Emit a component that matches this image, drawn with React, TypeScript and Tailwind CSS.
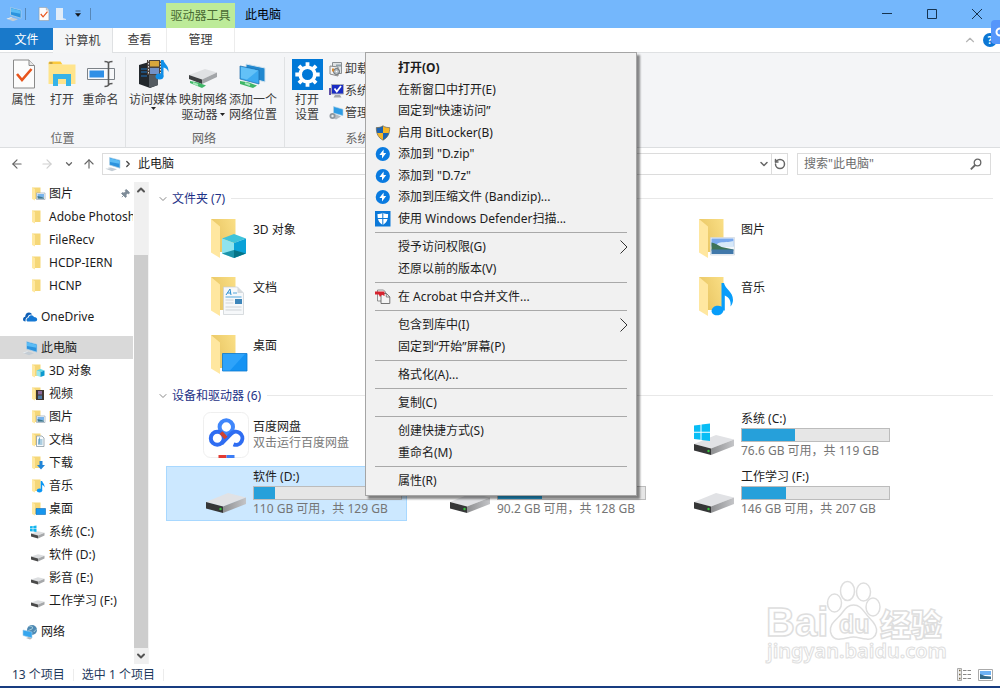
import type { ReactNode } from "react";
import { ChevronRight, ChevronDown, ChevronUp, ArrowLeft, ArrowRight, ArrowUp, Pin, RotateCcw } from "lucide-react";

/* ---------- Icons ---------- */

function PcIcon({ className = "w-4 h-4" }: { className?: string }) {
  return (
    <svg viewBox="0 0 16 16" className={className} aria-hidden="true">
      <path d="M4.500 1.500 15 4.200v8L4.500 9z" fill="#2b93de" stroke="#b8d4e6" strokeWidth="0.700" />
      <path d="M5 2.300 14.500 4.800v3L5 6z" fill="#5bbcf5" />
      <path d="m.5 12.800 4.500-1.600 7 2.100-5 1.900z" fill="#c3ccd4" />
      <path d="m.5 12.800 4.500-1.600 1.500.4-4.500 1.700z" fill="#e8edf0" />
    </svg>
  );
}

type Badge = "none" | "cube" | "video" | "picture" | "doc" | "download" | "music" | "desktop";

function SmallFolder({ badge }: { badge: Badge }) {
  return (
    <svg viewBox="0 0 16 16" className="w-4 h-4 shrink-0" aria-hidden="true">
      <path d="M2 1.500h8.500v11.500H5z" fill="#f5d778" />
      <path d="M2 1.500 5 3v11.500L2 13z" fill="#ffe8a0" />
      {badge === "cube" && (
        <>
          <path d="m10.500 6 4 1.500-4 1.500-4-1.500z" fill="#5fd6e6" />
          <path d="m6.500 7.500 4 1.500v5l-4-1.500z" fill="#9be7ef" />
          <path d="m14.500 7.500-4 1.500v5l4-1.500z" fill="#0b9ad0" />
        </>
      )}
      {badge === "video" && (
        <>
          <path d="M6 4h8v10H6z" fill="#40362f" />
          <path d="M8 5h4v3.500H8z" fill="#8a6a9c" />
          <path d="M8 9.500h4V13H8z" fill="#4f7ba8" />
        </>
      )}
      {badge === "picture" && (
        <>
          <path d="M6.500 7h8.500v6.500H6.500z" fill="#fff" stroke="#9aa7b4" strokeWidth="0.700" />
          <path d="M7.500 8h6.500v3H7.500z" fill="#78b4ec" />
          <path d="m7.500 10 2 .500 4.500 1v1.200H7.500z" fill="#3e7891" />
        </>
      )}
      {badge === "doc" && (
        <>
          <path d="M6.500 4h5.500l2 2v8.500H6.500z" fill="#f7fafc" stroke="#8c9aa5" strokeWidth="0.800" />
          <path d="M8 8h4.500M8 10h4.500M8 12h4.500M9.500 5.500 9 12" stroke="#3e8bb8" strokeWidth="0.800" />
        </>
      )}
      {badge === "download" && <path d="M9.500 6h3v4H15l-4 4.500L7 10h2.500z" fill="#2185d8" />}
      {badge === "music" && (
        <>
          <ellipse cx="9.500" cy="12.500" rx="2.700" ry="2" fill="#0a96f5" />
          <path d="M10.700 3h1.500c.2 2 2.600 2.800 2.400 6.500-.6-1.600-1.500-2.200-2.400-2.500v5.500h-1.500z" fill="#0a96f5" />
        </>
      )}
      {badge === "desktop" && <path d="M6 7.500h9.500v6H6z" fill="#1696ee" stroke="#0b6cb8" strokeWidth="0.600" />}
    </svg>
  );
}

function SmallDrive({ windows = false }: { windows?: boolean }) {
  return (
    <svg viewBox="0 0 16 16" className="w-4 h-4 shrink-0" aria-hidden="true">
      <path d="m1 9.500 7-2.200 6.500 1.500L8 11.500z" fill="#dcdee0" />
      <path d="m1 9.500 7 2v3l-7-2z" fill="#4a4a4a" />
      <path d="m8 11.500 6.500-2.700v2.700L8 14.500z" fill="#a6a8aa" />
      {windows && (
        <path d="M0 2.200 2.700 2v2.400H0zM3.300 1.900 6.500 1.500v2.900H3.300zM0 5h2.700v2.400L0 7.200zM3.300 5h3.200v2.900l-3.200-.4z" fill="#12b4ee" />
      )}
    </svg>
  );
}

function CloudIcon() {
  return (
    <svg viewBox="0 0 16 16" className="w-4 h-4 shrink-0" aria-hidden="true">
      <path d="M1 10.500c0-1.500 1-2.500 2.200-2.700C3.200 5 5 3.500 7 3.500c1.500 0 2.500.8 3 2C7.500 5 6 6.500 5.700 8.200 4 8.500 3.400 10 3.500 12.500 2 12.500 1 11.800 1 10.500z" fill="#0f5fb5" />
      <path d="M4.500 11c0-1.400 1-2.200 2-2.300.2-1.500 1.400-2.400 2.800-2.400 1.300 0 2.200.7 2.600 1.800 2 0 3.300 1 3.300 2.500 0 1.300-1 2-2.200 2H6.300c-1 0-1.800-.6-1.800-1.600z" fill="#1478d4" />
    </svg>
  );
}

function NetworkIcon() {
  return (
    <svg viewBox="0 0 16 16" className="w-4 h-4 shrink-0" aria-hidden="true">
      <circle cx="10" cy="6" r="5" fill="#4f8ab4" />
      <path d="M7.500 2.500c2-1 3 0 3 1.500S8 5.500 6.500 6.500M12 8c.5-2 2-1.500 2.500-2.500" stroke="#a8d0dc" fill="none" />
      <path d="m1 6 9 2v6L1 11.500z" fill="#36a6ee" stroke="#9fcdeb" strokeWidth="0.600" />
      <path d="m4 14 3-1 3 1.500-2 1z" fill="#b0b8be" />
    </svg>
  );
}

function PictureBadge() {
  return (
    <>
      <path d="M19.500 23.500h24V41h-24z" fill="#f2f6fa" stroke="#c8d2dc" strokeWidth="0.600" />
      <path d="M20.500 24.500h22v8h-22z" fill="#79a9ee" />
      <path d="M26 30c4-3 9-1 16.500-3v6H26z" fill="#d8e9f8" />
      <path d="M20.500 28.500c4 .5 6 2.500 10 4.500l12 2.500v1h-22z" fill="#3d7358" />
      <path d="M20.500 35.500h22V40h-22z" fill="#4178aa" />
    </>
  );
}

function BigFolder({ badge }: { badge: Badge }) {
  return (
    <svg viewBox="0 0 48 48" className="w-12 h-12 shrink-0" aria-hidden="true">
      <defs>
        <linearGradient id={`back-${badge}`} x1="0" y1="0.500" x2="1" y2="0">
          <stop offset="0" stopColor="#e8c562" />
          <stop offset="1" stopColor="#fadf86" />
        </linearGradient>
      </defs>
      <path d="M8 5h24.500v33H16z" fill={`url(#back-${badge})`} />
      <path d="M8 5 17 12.500V44L8 38.500z" fill="#ffe7a0" />
      {badge === "cube" && (
        <>
          <path d="m31 20 12 4.500L31 29l-12-4.500z" fill="#3fc3da" />
          <path d="M19 24.500 31 29v15L19 39.500z" fill="#8fe3ee" />
          <path d="M43 24.500 31 29v15l12-4.500z" fill="#0aa2d8" />
          <path d="M19 39.500 31 36v8z" fill="#1c94ab" />
          <path d="M43 39.500 31 36v8z" fill="#067487" />
        </>
      )}
      {badge === "doc" && (
        <>
          <path d="M20.500 15h14l6 6v21.500h-20z" fill="#f6f8fa" stroke="#c9ced3" strokeWidth="0.700" />
          <path d="M34.500 15v6h6z" fill="#d5dade" />
          <path d="m23 23 4-6 1 6M24.500 21h3.500" stroke="#2d8fd0" fill="none" />
          <path d="M30 21h4M22.500 25h16" stroke="#57a8dc" />
          <path d="M22.500 28h8M22.500 31h8M22.500 35h16M22.500 38h16" stroke="#cfd4d8" />
          <path d="M32 27h7v5h-7z" fill="#3e86ba" />
        </>
      )}
      {badge === "desktop" && (
        <>
          <path d="M19.500 23.500h24.500v17.500h-24.500z" fill="#1593f3" stroke="#0c78ce" strokeWidth="0.800" />
          <path d="M20 24h22L27 40.500h-7z" fill="#2ea3fa" />
        </>
      )}
      {badge === "picture" && <PictureBadge />}
      {badge === "music" && (
        <>
          <ellipse cx="26.500" cy="38.500" rx="6" ry="4.800" fill="#079dfa" transform="rotate(-12 26.500 38.500)" />
          <path d="M30.500 11h2.500c1 6 9 8.500 9 17 0 2-.8 4.500-2.500 6.500 1-6-2-9.500-5.700-11v15h-3.300z" fill="#079dfa" />
        </>
      )}
    </svg>
  );
}

function BigDrive({ windows = false }: { windows?: boolean }) {
  return (
    <svg viewBox="0 0 48 48" className="w-12 h-12 shrink-0" aria-hidden="true">
      <defs>
        <linearGradient id="side" x1="0" x2="1">
          <stop offset="0" stopColor="#8e8f91" />
          <stop offset="1" stopColor="#c4c5c8" />
        </linearGradient>
      </defs>
      <path d="m3 33 22-9 18 4.500L20 37.500z" fill="#e1e2e5" />
      <path d="M3 33 20 37.500V44L3 39.500z" fill="#353637" />
      <path d="m20 37.500 23-9V35L20 44z" fill="url(#side)" />
      <circle cx="17.500" cy="40" r="1.200" fill="#35c43a" />
      {windows && (
        <path d="M3 14.500 9.500 13.800v7H3zM10.500 13.600 19 12.500v8.300h-8.500zM3 21.800h6.500v7L3 28zM10.500 21.800H19v8.300l-8.500-1.200z" fill="#08bdf5" />
      )}
    </svg>
  );
}

function NetdiskIcon() {
  return (
    <svg viewBox="0 0 48 48" className="w-12 h-12 shrink-0" aria-hidden="true">
      <rect x="0.500" y="1.500" width="45" height="45" rx="7" fill="#fff" stroke="#efefef" />
      <g fill="none" strokeWidth="4">
        <circle cx="23.300" cy="16" r="6.700" stroke="#3f86fb" />
        <circle cx="14.300" cy="27.300" r="6.500" stroke="#2f6df2" />
        <path d="M18.500 32.500 28 23a6.500 6.500 0 1 1 2.500 10.300" stroke="#2f6df2" />
        <path d="m18 21.500 5 5.500" stroke="#d2432f" />
      </g>
      <path d="M15.500 44h8v3h-8z" fill="#e23b33" />
      <path d="M23.500 44h8v3h-8z" fill="#3c7df5" />
    </svg>
  );
}

function CheckDoc({ className }: { className: string }) {
  return (
    <svg viewBox="0 0 24 30" className={className} aria-hidden="true">
      <path d="M1.500 1h15.500l5.500 5.500V29h-21z" fill="#fcfcfc" stroke="#8a8a8a" />
      <path d="M17 1v5.500h5.500" fill="#e6e6e6" stroke="#8a8a8a" />
      <path d="m5 15 5 6 9.500-11" fill="none" stroke="#e8541c" strokeWidth="2.600" />
    </svg>
  );
}

function OpenFolderIcon() {
  return (
    <svg viewBox="0 0 30 30" className="w-[30px] h-[30px]" aria-hidden="true">
      <path d="M1.500 4.500c0-1.500.5-2 2-2h10l2 3h-14z" fill="#fbc93c" />
      <path d="M1.500 5.500h27V25h-27z" fill="#ffe48c" />
      <path d="M2.500 4h3" stroke="#8b7440" />
      <path d="M6 27V15h18v12h-5v-7h-8v7z" fill="#37b3e8" />
    </svg>
  );
}

function RenameIcon() {
  return (
    <svg viewBox="0 0 30 30" className="w-[30px] h-[30px]" aria-hidden="true">
      <path d="M1.500 9.500h27v11h-27z" fill="#f7f8fa" stroke="#7c8288" />
      <path d="M3.500 11.500H18v7H3.500z" fill="#2f8fe6" />
      <path d="M18.500 2.500c2.500 0 4 .7 4 2v22c0-1.300 1.500-2 4-2M26.500 2.500c-2.500 0-4 .7-4 2M18.500 27.500c2.500 0 4-.7 4-2" fill="none" stroke="#5a5a5a" strokeWidth="1.600" />
    </svg>
  );
}

function MediaIcon() {
  return (
    <svg viewBox="0 0 32 30" className="w-8 h-[30px]" aria-hidden="true">
      <path d="m2 6 10-3 9 2v21l-8 3L2 25z" fill="#23282d" />
      <path d="m12 8 9-3v21l-9 3z" fill="#555b61" />
      <path d="M4 10h6M4 13h6M4 17h6" stroke="#1e73c0" />
      <path d="M10 1h15v15H10z" fill="#4b423e" />
      <path d="M13 2h9v5.500h-9z" fill="#d9a63c" />
      <path d="M13 9h9v6h-9z" fill="#7392c8" />
      <path d="M11.500 1v15M23.500 1v15" stroke="#ddd" strokeDasharray="1.500 1.500" />
      <ellipse cx="22.500" cy="17.500" rx="4" ry="3" fill="#118fe8" />
      <path d="M24 1h2.500c.5 4 5.500 5 5 12-1.300-3-3-4-5-4.500v9H24z" fill="#118fe8" />
    </svg>
  );
}

function MapDriveIcon() {
  return (
    <svg viewBox="0 0 32 30" className="w-8 h-[30px]" aria-hidden="true">
      <path d="m2 16 16-6 12 3.500-15 7z" fill="#dfe1e3" />
      <path d="m2 16 13 4.500V25L2 20z" fill="#3c3e40" />
      <path d="m15 20.500 15-7V18l-15 7z" fill="#a2a5a8" />
      <path d="m3 22 8 1.500 8 3-4 2.500-12-5z" fill="#3fb667" />
      <path d="m6 24 5 2" stroke="#a5e6bb" strokeWidth="2" />
    </svg>
  );
}

function NetPlaceIcon() {
  return (
    <svg viewBox="0 0 32 30" className="w-8 h-[30px]" aria-hidden="true">
      <path d="m9 5 19 4v14L9 18z" fill="#2288cf" stroke="#d4e4ef" />
      <path d="m3 7 19 4v14L3 20z" fill="#3daaf0" stroke="#1c6ca8" strokeWidth="0.700" />
      <path d="m4 8 17 3.500-11 9L4 19z" fill="#63c1f7" />
      <path d="m3 22 9 1.500 8 3-4 2.500-13-4z" fill="#3fb667" />
      <path d="m8 24 5 2" stroke="#a5e6bb" strokeWidth="2" />
    </svg>
  );
}

function GearTile() {
  return (
    <svg viewBox="0 0 31 31" className="w-[31px] h-[31px]" aria-hidden="true">
      <path d="M0 0h31v31H0z" fill="#0078d7" />
      <g fill="none" stroke="#fff">
        <circle cx="15.500" cy="15.500" r="7.300" strokeWidth="3.600" />
        <path d="M15.500 3.300v4M15.500 23.700v4M3.300 15.500h4M23.700 15.500h4M6.900 6.900l2.800 2.800M21.300 21.300l2.800 2.800M6.900 24.100l2.800-2.800M21.300 9.700l2.800-2.800" strokeWidth="3.800" />
      </g>
    </svg>
  );
}

function UninstallIcon() {
  return (
    <svg viewBox="0 0 16 16" className="w-4 h-4" aria-hidden="true">
      <path d="M4.500 1.500h9v11h-9z" fill="#dfe2e4" stroke="#8a8f93" />
      <path d="m2 5 8 1v9l-8-2z" fill="#f3f3f3" stroke="#888" />
      <circle cx="8.500" cy="10.500" r="3" fill="#b6bdc2" stroke="#60676c" />
      <circle cx="8.500" cy="10.500" r="0.800" fill="#fff" />
      <path d="M8 3.500h5v2H8z" fill="#8fa0ab" />
      <path d="M4 7.500h2v3H4z" fill="#d8872f" />
    </svg>
  );
}

function SystemIcon() {
  return (
    <svg viewBox="0 0 16 16" className="w-4 h-4" aria-hidden="true">
      <path d="M1 5h2v7H1z" fill="#5f50a8" />
      <path d="M3.500 1.500h12v9.500h-12z" fill="#1a2cc4" stroke="#a8acb8" />
      <path d="m6.500 5.500 2.300 3 4.200-5.500" fill="none" stroke="#fff" strokeWidth="1.800" />
      <path d="M7 12h5l1.500 2.500h-8z" fill="#a5a8ac" />
    </svg>
  );
}

function ManageIcon() {
  return (
    <svg viewBox="0 0 16 16" className="w-4 h-4" aria-hidden="true">
      <path d="M5.500 1.500 15 4.200v6.500L5.500 8z" fill="#2e9ce4" stroke="#b3d2e4" strokeWidth="0.600" />
      <path d="m2 11 5-2 6 2.500-5 3z" fill="#b5bcc2" />
      <circle cx="4.500" cy="11" r="3" fill="#8d979e" />
      <circle cx="4.500" cy="11" r="1.200" fill="#e8ecee" />
    </svg>
  );
}

function ShieldIcon() {
  return (
    <svg viewBox="0 0 16 16" className="w-4 h-4" aria-hidden="true">
      <path d="M8 .8C6 2.300 3.500 2.600 1.300 2.600c0 6 1.700 10 6.700 12.600 5-2.600 6.700-6.600 6.700-12.600C12.500 2.600 10 2.300 8 .8z" fill="#f6b526" />
      <path d="M8 .8C6 2.300 3.500 2.600 1.300 2.600c0 2 .2 3.800.7 5.400h6zM8 8v7.200c3.200-1.700 5-4 6-7.200z" fill="#1c64b4" />
      <path d="M8 .8C6 2.300 3.500 2.600 1.300 2.600c0 6 1.700 10 6.700 12.600 5-2.600 6.700-6.600 6.700-12.600C12.500 2.600 10 2.300 8 .8z" fill="none" stroke="#6b6a5e" strokeWidth="0.700" />
    </svg>
  );
}

function BandizipIcon() {
  return (
    <svg viewBox="0 0 16 16" className="w-4 h-4" aria-hidden="true">
      <circle cx="7.800" cy="8" r="7.100" fill="#0a7be0" />
      <path d="M8.600 3.500V7h2.600l-4.200 5.500V9H4.400z" fill="#fff" />
    </svg>
  );
}

function DefenderIcon() {
  return (
    <svg viewBox="0 0 16 16" className="w-4 h-4" aria-hidden="true">
      <path d="M0 0h15.500v15.500H0z" fill="#0b78d8" />
      <path d="M7.800 1.800C6.300 2.800 4.300 3.100 2.500 3.100 2.500 8.500 3.800 12 7.800 14c4-2 5.300-5.500 5.300-10.900-1.800 0-3.800-.3-5.300-1.300z" fill="#fff" />
      <path d="M7.800 2v12M2.500 7.500h10.600" stroke="#0b78d8" />
    </svg>
  );
}

function AcrobatIcon() {
  return (
    <svg viewBox="0 0 16 16" className="w-4 h-4" aria-hidden="true">
      <path d="M2.500 1h6l2 2v9h-8z" fill="#f4f4f4" stroke="#777" strokeWidth="0.800" />
      <path d="M6 4.500h5.500L14.800 8v6.500H6z" fill="#f4f4f4" stroke="#666" strokeWidth="0.900" />
      <path d="M11.300 4.500V8h3.500" fill="none" stroke="#666" strokeWidth="0.800" />
      <path d="M0 2.500h9.500V7L7 5.800 5 8 3.800 5.500H0z" fill="#d6232f" />
    </svg>
  );
}

function SearchIcon() {
  return (
    <svg viewBox="0 0 12 12" className="h-3 w-3" fill="none" stroke="#666" aria-hidden="true">
      <circle cx="7.500" cy="4.500" r="3.300" strokeWidth="1.300" />
      <path d="m5.200 7-4.400 4.400" strokeWidth="1.800" />
    </svg>
  );
}

/* ---------- Data ---------- */

type TreeNode = { label: string; icon: ReactNode; root?: boolean; selected?: boolean; pinned?: boolean; space?: boolean };

const tree: TreeNode[] = [
  { label: "图片", icon: <SmallFolder badge="picture" />, pinned: true },
  { label: "Adobe Photosh", icon: <SmallFolder badge="none" /> },
  { label: "FileRecv", icon: <SmallFolder badge="none" /> },
  { label: "HCDP-IERN", icon: <SmallFolder badge="none" /> },
  { label: "HCNP", icon: <SmallFolder badge="none" /> },
  { label: "OneDrive", icon: <CloudIcon />, root: true, space: true },
  { label: "此电脑", icon: <PcIcon className="w-4 h-4 shrink-0" />, root: true, selected: true, space: true },
  { label: "3D 对象", icon: <SmallFolder badge="cube" /> },
  { label: "视频", icon: <SmallFolder badge="video" /> },
  { label: "图片", icon: <SmallFolder badge="picture" /> },
  { label: "文档", icon: <SmallFolder badge="doc" /> },
  { label: "下载", icon: <SmallFolder badge="download" /> },
  { label: "音乐", icon: <SmallFolder badge="music" /> },
  { label: "桌面", icon: <SmallFolder badge="desktop" /> },
  { label: "系统 (C:)", icon: <SmallDrive windows /> },
  { label: "软件 (D:)", icon: <SmallDrive /> },
  { label: "影音 (E:)", icon: <SmallDrive /> },
  { label: "工作学习 (F:)", icon: <SmallDrive /> },
  { label: "网络", icon: <NetworkIcon />, root: true, space: true },
];

// null keeps a grid cell empty
const folders: ({ label: string; badge: Badge } | null)[] = [
  { label: "3D 对象", badge: "cube" },
  null,
  { label: "图片", badge: "picture" },
  { label: "文档", badge: "doc" },
  null,
  { label: "音乐", badge: "music" },
  { label: "桌面", badge: "desktop" },
];

type MenuEntry = { label: string; icon?: ReactNode; bold?: boolean; submenu?: boolean };

const menu: MenuEntry[][] = [
  [
    { label: "打开(O)", bold: true },
    { label: "在新窗口中打开(E)" },
    { label: "固定到“快速访问”" },
    { label: "启用 BitLocker(B)", icon: <ShieldIcon /> },
    { label: '添加到 "D.zip"', icon: <BandizipIcon /> },
    { label: '添加到 "D.7z"', icon: <BandizipIcon /> },
    { label: "添加到压缩文件 (Bandizip)...", icon: <BandizipIcon /> },
    { label: "使用 Windows Defender扫描...", icon: <DefenderIcon /> },
  ],
  [{ label: "授予访问权限(G)", submenu: true }, { label: "还原以前的版本(V)" }],
  [{ label: "在 Acrobat 中合并文件...", icon: <AcrobatIcon /> }],
  [{ label: "包含到库中(I)", submenu: true }, { label: "固定到“开始”屏幕(P)" }],
  [{ label: "格式化(A)..." }],
  [{ label: "复制(C)" }],
  [{ label: "创建快捷方式(S)" }, { label: "重命名(M)" }],
  [{ label: "属性(R)" }],
];

/* ---------- Parts ---------- */

function TitleBar() {
  return (
    <header className="flex h-7 bg-[#74b7fc]">
      <div className="flex w-[166px] items-center pl-1.5">
        <PcIcon />
        <span className="ml-[3px] h-3 w-px bg-[#5687b8]" />
        <button aria-label="属性" className="ml-3"><CheckDoc className="h-3.5 w-3" /></button>
        <button aria-label="新建文件夹" className="ml-1.5">
          <svg viewBox="0 0 10 14" className="h-3.5 w-2.5">
            <path d="M0 1h7v10l3 1v1H0z" fill="#cfe2f5" />
            <path d="M0 1h7v12H0z" fill="#e0ecf8" />
          </svg>
        </button>
        <button aria-label="自定义快速访问工具栏" className="ml-2">
          <svg viewBox="0 0 8 8" className="h-2 w-2"><path d="M1.500 1h5M1.500 3.500h5L4 6.500z" fill="#111" stroke="#111" strokeWidth="0.500" /></svg>
        </button>
        <span className="ml-2 h-3 w-px bg-[#5687b8]" />
      </div>
      <div className="mt-[3px] flex w-[69px] items-center justify-center bg-[#bdeb99] pt-px whitespace-nowrap text-[#4a6b34]">驱动器工具</div>
      <h1 className="flex flex-1 items-center pt-px pl-2.5 text-black">此电脑</h1>
      <div className="flex text-[#16334f]">
        <button aria-label="最小化" className="grid w-[45px] place-items-center">
          <svg viewBox="0 0 10 10" className="h-2.5 w-2.5"><path d="M0 4.500h10" stroke="currentColor" /></svg>
        </button>
        <button aria-label="最大化" className="grid w-[45px] place-items-center">
          <svg viewBox="0 0 10 10" className="h-2.5 w-2.5"><path d="M.5.500h9v9h-9z" fill="none" stroke="currentColor" /></svg>
        </button>
        <button aria-label="关闭" className="grid w-[46px] place-items-center">
          <svg viewBox="0 0 10 10" className="h-2.5 w-2.5"><path d="m0 0 10 10M10 0 0 10" stroke="currentColor" /></svg>
        </button>
      </div>
    </header>
  );
}

function Tabs() {
  return (
    <nav className="flex h-[25px] border-b border-[#dfe1e3] text-[#3c3c3c]">
      <button className="h-[22px] w-[53px] bg-[#1979ca] pt-0.5 text-white">文件</button>
      <button className="h-[25px] w-[60px] border-r border-[#dfe1e3] bg-[#f5f6f7]">计算机</button>
      <button className="w-[53px]">查看</button>
      <button className="w-[69px] border-x border-[#ececec]">管理</button>
      <div className="ml-auto flex items-center gap-1.5 pr-[3px]">
        <ChevronUp className="h-3.5 w-3.5 text-[#b5b5b5]" />
        <button aria-label="帮助" className="h-3.5 w-3.5 rounded-full bg-[#0b76d4] text-[10px] leading-3 font-bold text-white">?</button>
      </div>
    </nav>
  );
}

function RibbonButton({ icon, lines, arrow, className }: { icon: ReactNode; lines: string[]; arrow?: "inline" | "below"; className: string }) {
  return (
    <button className={`flex flex-col items-center whitespace-nowrap ${className}`}>
      <span className="mb-px grid h-[34px] place-items-center">{icon}</span>
      {lines.map((line, i) => (
        <span key={line} className="flex items-center leading-[15px]">
          {line}
          {arrow === "inline" && i === lines.length - 1 && <Caret className="ml-0.5" />}
        </span>
      ))}
      {arrow === "below" && <Caret />}
    </button>
  );
}

function Caret({ className = "" }: { className?: string }) {
  return (
    <svg viewBox="0 0 5 3" className={`h-[3px] w-[5px] ${className}`} aria-hidden="true"><path d="M0 0h5L2.500 3z" fill="#222" /></svg>
  );
}

function RibbonGroup({ title, children, className }: { title: string; children: ReactNode; className: string }) {
  return (
    <section className={`flex flex-col justify-between border-r border-[#e0e2e4] ${className}`}>
      <div className="flex">{children}</div>
      <h2 className="pr-1 text-center leading-4 text-[#666]">{title}</h2>
    </section>
  );
}

function Ribbon() {
  return (
    <div className="flex h-[95px] border-b border-[#dcdee0] bg-[#f4f5f7] pt-1 text-[#3c3c3c]">
      <RibbonGroup title="位置" className="w-[126px] pl-1">
        <RibbonButton className="w-[39px]" icon={<CheckDoc className="h-[30px] w-6" />} lines={["属性"]} />
        <RibbonButton className="w-[38px]" icon={<OpenFolderIcon />} lines={["打开"]} />
        <RibbonButton className="w-[39px]" icon={<RenameIcon />} lines={["重命名"]} />
      </RibbonGroup>
      <RibbonGroup title="网络" className="w-[159px] pl-0.5">
        <RibbonButton className="w-[50px]" icon={<MediaIcon />} lines={["访问媒体"]} arrow="below" />
        <RibbonButton className="w-[50px]" icon={<MapDriveIcon />} lines={["映射网络", "驱动器"]} arrow="inline" />
        <RibbonButton className="w-[50px]" icon={<NetPlaceIcon />} lines={["添加一个", "网络位置"]} />
      </RibbonGroup>
      <RibbonGroup title="系统" className="w-[146px] pl-1">
        <RibbonButton className="w-9" icon={<GearTile />} lines={["打开", "设置"]} />
        <div className="flex flex-col pt-px whitespace-nowrap">
          <button className="flex h-[22px] items-center gap-px pl-[3px]"><UninstallIcon />卸载程序</button>
          <button className="flex h-[22px] items-center gap-px pl-[3px]"><SystemIcon />系统属性</button>
          <button className="flex h-[22px] items-center gap-px pl-[3px]"><ManageIcon />管理</button>
        </div>
      </RibbonGroup>
    </div>
  );
}

function AddressRow() {
  return (
    <div className="flex h-[34px] items-start pt-[5px] pr-[9px]">
      <div className="flex h-[22px] w-[102px] items-center text-[#666]">
        <button aria-label="后退" className="ml-2.5"><ArrowLeft className="h-3.5 w-3.5" /></button>
        <button aria-label="前进" className="ml-4 text-[#cfcfcf]"><ArrowRight className="h-3.5 w-3.5" /></button>
        <button aria-label="最近位置" className="ml-2.5"><ChevronDown className="h-2.5 w-2.5" strokeWidth={3} /></button>
        <button aria-label="上移" className="ml-2"><ArrowUp className="h-3.5 w-3.5" /></button>
      </div>
      <div className="flex h-[22px] min-w-0 flex-1 items-center border border-[#dcdcdc]">
        <span className="pl-0.5"><PcIcon /></span>
        <ChevronRight className="ml-0.5 h-2.5 w-2.5 text-[#444]" strokeWidth={3} />
        <button className="ml-[5px]">此电脑</button>
        <button aria-label="历史记录" className="mr-px ml-auto text-[#666]"><ChevronDown className="h-3 w-3" strokeWidth={3} /></button>
        <button aria-label="刷新" className="grid h-full w-4 place-items-center border-l border-[#dcdcdc] text-[#666]"><RotateCcw className="h-3 w-3" strokeWidth={3} /></button>
      </div>
      <label className="ml-[9px] flex h-[22px] w-[194px] items-center border border-[#dcdcdc] pr-2 pl-1.5">
        <input type="search" aria-label="搜索" placeholder={'搜索"此电脑"'} className="min-w-0 flex-1 bg-transparent outline-none placeholder:text-[#6d6d6d]" />
        <SearchIcon />
      </label>
    </div>
  );
}

function Sidebar() {
  return (
    <aside className="flex w-[149px] shrink-0 border-r border-[#f3f3f3]">
      <ul className="w-[133px] overflow-hidden">
        {tree.map((node, i) => (
          <li key={i} className={node.space ? "mt-2" : ""}>
            <button
              className={`flex h-[23px] w-full items-center gap-[3px] text-left whitespace-nowrap ${node.root ? "pl-[22px]" : "pl-[30px]"} ${node.selected ? "bg-[#d9d9d9]" : ""}`}
            >
              {node.icon}
              <span>{node.label}</span>
              {node.pinned && <Pin className="mr-[3px] ml-auto h-2.5 w-2.5 rotate-45 fill-[#7f8d99] text-[#7f8d99]" />}
            </button>
          </li>
        ))}
      </ul>
      <div className="ml-px flex w-3.5 flex-col bg-[#f0f0f0]">
        <button aria-label="向上滚动" className="grid h-[15px] place-items-center"><ChevronUp className="h-3 w-3 text-[#555]" strokeWidth={4} /></button>
        <div className="mt-[58px] flex-1 bg-[#cdcdcd]" />
        <button aria-label="向下滚动" className="grid h-4 place-items-center"><ChevronDown className="h-3 w-3 text-[#555]" strokeWidth={4} /></button>
      </div>
    </aside>
  );
}

function Tile({ icon, name, note }: { icon: ReactNode; name: string; note?: string }) {
  return (
    <li className="flex h-[55px] gap-0.5 border border-transparent pt-0.5 pl-9">
      {icon}
      <div className="pt-2 leading-4">
        <p>{name}</p>
        {note && <p className="text-[#7a7a7a]">{note}</p>}
      </div>
    </li>
  );
}

function DriveTile({ name, note, used, windows, selected }: { name: string; note: string; used: number; windows?: boolean; selected?: boolean }) {
  return (
    <li className={`flex h-[55px] gap-0.5 border pt-0.5 pl-9 ${selected ? "border-[#a8d8ff] bg-[#cce8ff]" : "border-transparent"}`}>
      <BigDrive windows={windows} />
      <div className="leading-4 whitespace-nowrap">
        <p>{name}</p>
        <div role="meter" aria-label={name} aria-valuemin={0} aria-valuemax={100} aria-valuenow={used} className="my-px h-3.5 w-[149px] border border-[#bcbcbc] bg-[#e6e6e6]">
          <div className="h-full bg-[#26a0da]" style={{ width: `${used}%` }} />
        </div>
        <p className="text-[#757575]">{note}</p>
      </div>
    </li>
  );
}

function Group({ title, children }: { title: string; children: ReactNode }) {
  return (
    <section>
      <h2 className="flex h-[26px] items-center pt-px pr-[7px] pl-2 text-[#1e3287]">
        <ChevronDown className="mr-[3px] h-3 w-3 text-[#888]" />
        {title}
        <span className="ml-1.5 h-px flex-1 bg-[#e8e8e8]" />
      </h2>
      <ul className="grid grid-cols-[repeat(auto-fill,241px)] gap-[3px] pl-[17px]">{children}</ul>
    </section>
  );
}

function ContextMenu() {
  return (
    <div role="menu" className="absolute top-[52px] left-[365px] z-10 w-[272px] border border-[#a5a5a5] bg-[#f1f1f1] py-1 shadow-[3px_3px_2px_rgba(0,0,0,0.45)]">
      {menu.map((group, i) => (
        <div key={i}>
          {i > 0 && <hr className="mx-[9px] my-[3px] border-[#a9a9a9]" />}
          <ul>
            {group.map((entry) => (
              <li key={entry.label} className="h-[21px] even:h-[22px]">
                <button role="menuitem" className={`flex h-full w-full items-center gap-[7px] pt-px pr-2 pl-[9px] text-left ${entry.bold ? "font-bold" : ""}`}>
                  <span className="w-4 shrink-0">{entry.icon}</span>
                  {entry.label}
                  {entry.submenu && (
                    <svg viewBox="0 0 8 14" className="ml-auto h-3.5 w-2" aria-hidden="true"><path d="m.5.500 6.500 6.500-6.500 6.500" fill="none" stroke="#333" /></svg>
                  )}
                </button>
              </li>
            ))}
          </ul>
        </div>
      ))}
    </div>
  );
}

function Watermark() {
  return (
    <svg viewBox="0 0 184 92" className="pointer-events-none absolute right-[52px] bottom-[18px] h-[92px] w-[184px]" aria-label="Baidu">
      <g fill="#fff" stroke="#dedede" strokeWidth="1.500">
        <text x="2" y="58" fontSize="40" fontWeight="700" fontFamily="Liberation Sans">Bai</text>
        <ellipse cx="70.500" cy="25" rx="7" ry="9" />
        <ellipse cx="83.500" cy="13" rx="7" ry="9.500" />
        <ellipse cx="99.500" cy="14" rx="7" ry="9" />
        <ellipse cx="109" cy="29" rx="7" ry="9" />
        <path d="M89.500 27c8 0 10 7 16 13 5 5 8 9 7 14-1 5-5 8-10 7-5 0-8-2-13-2s-8 2-13 2c-6 1-9-3-10-7-1-6 2-9 7-14 6-5 8-13 16-13z" />
        <text x="75" y="55" fontSize="25" fontWeight="700" fontFamily="Liberation Sans">du</text>
        <text x="116" y="58" fontSize="31" fontWeight="900" fontFamily="Noto Sans CJK SC">经验</text>
        <text x="3" y="80" fontSize="20" fontWeight="600" fontFamily="Noto Sans" strokeWidth="1">jingyan.baidu.com</text>
      </g>
    </svg>
  );
}

function StatusBar() {
  return (
    <footer className="flex h-6 items-center border-b-2 border-[#183c80] pr-[7px] pl-3 text-[#1e395b]">
      <span>13 个项目</span>
      <span className="mx-2 h-3 w-px bg-[#ececec]" />
      <span>选中 1 个项目</span>
      <span className="ml-2 h-3 w-px bg-[#ececec]" />
      <button aria-label="详细信息" className="ml-auto">
        <svg viewBox="0 0 15 14" className="h-3.5 w-[15px]">
          <path d="M.5.500h4v12h-4z" fill="#eee" stroke="#aaa" />
          <path d="M2 2.500h1.500M2 6.500h1.500M2 10.500h1.500" stroke="#764" strokeWidth="1.500" />
          <path d="M6 2.500h3.500M10.500 2.500H14M6 6.500h3.500M10.500 6.500H14M6 10.500h3.500M10.500 10.500H14" stroke="#888" />
        </svg>
      </button>
      <button aria-label="大缩略图" className="ml-1.5">
        <svg viewBox="0 0 15 12" className="h-3 w-[15px]">
          <path d="M.5.500h14v11H.5z" fill="#fff" stroke="#aaa" />
          <path d="M2 2h11v4H2z" fill="#6fb2f4" />
          <path d="m2 5 5 2 6 .5V10H2z" fill="#34698a" />
        </svg>
      </button>
    </footer>
  );
}

export default function App() {
  return (
    <div className="relative flex min-h-screen flex-col overflow-hidden bg-white font-['Noto_Sans','Noto_Sans_CJK_SC',sans-serif] text-[12px] leading-4 text-[#1c1c1c]">
      <TitleBar />
      <Tabs />
      <Ribbon />
      <AddressRow />
      <div className="flex flex-1">
        <Sidebar />
        <main className="min-w-0 flex-1 pt-[3px]">
          <Group title="文件夹 (7)">
            {folders.map((f, i) =>
              f ? <Tile key={i} icon={<BigFolder badge={f.badge} />} name={f.label} /> : <li key={i} />
            )}
          </Group>
          <Group title="设备和驱动器 (6)">
            <Tile icon={<NetdiskIcon />} name="百度网盘" note="双击运行百度网盘" />
            <li />
            <DriveTile name="系统 (C:)" note="76.6 GB 可用，共 119 GB" used={36} windows />
            <DriveTile name="软件 (D:)" note="110 GB 可用，共 129 GB" used={14} selected />
            <DriveTile name="影音 (E:)" note="90.2 GB 可用，共 128 GB" used={30} />
            <DriveTile name="工作学习 (F:)" note="146 GB 可用，共 207 GB" used={30} />
          </Group>
        </main>
      </div>
      <StatusBar />
      <Watermark />
      <ContextMenu />
      <button aria-label="网盘悬浮窗" className="absolute top-5 right-0 grid h-6 w-[9px] place-items-center rounded-l bg-[#5596fb]">
        <svg viewBox="0 0 6 10" className="ml-0.5 h-2.5 w-1.5"><path d="M6 1.500a3.500 3.500 0 0 0 0 7" fill="none" stroke="#fff" strokeWidth="2" /></svg>
      </button>
    </div>
  );
}
